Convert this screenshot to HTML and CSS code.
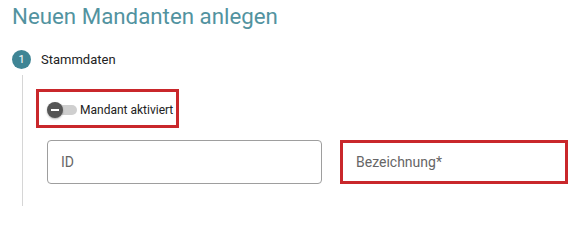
FILE: index.html
```html
<!DOCTYPE html>
<html lang="de">
<head>
<meta charset="utf-8">
<title>Neuen Mandanten anlegen</title>
<link rel="stylesheet" href="styles.css">
</head>
<body>
  <h1 class="title">Neuen Mandanten anlegen</h1>
  <div class="step">
    <div class="step-head">
      <span class="step-num">1</span>
      <span class="step-label">Stammdaten</span>
    </div>
    <div class="step-body">
      <div class="toggle-row highlight">
        <span class="switch"><span class="track"></span><span class="thumb"></span></span>
        <span class="toggle-label">Mandant aktiviert</span>
      </div>
      <div class="fields">
        <div class="field field-id"><span class="placeholder">ID</span></div>
        <div class="field field-name highlight"><span class="placeholder">Bezeichnung*</span></div>
      </div>
    </div>
  </div>
</body>
</html>
```

FILE: styles.css
```css
html, body {
  margin: 0;
  padding: 0;
  background: #ffffff;
  font-family: Roboto, "Liberation Sans", sans-serif;
  overflow: hidden;
}

.title {
  margin: 4px 0 0 12px;
  font-size: 22.3px;
  line-height: 25px;
  font-weight: 400;
  color: #5293a0;
}

.step-head {
  display: flex;
  align-items: center;
  margin-top: 21px;
  padding-left: 12px;
  height: 19px;
}

.step-num {
  width: 19px;
  height: 19px;
  border-radius: 50%;
  background: #3f8595;
  color: #ffffff;
  font-size: 11px;
  display: flex;
  align-items: center;
  justify-content: center;
}

.step-label {
  margin-left: 10px;
  font-size: 13px;
  color: #222222;
}

.step-body {
  margin: 6px 0 0 22px;
  border-left: 1px solid #d6d6d6;
  padding: 14px 0 22px 13px;
}

.highlight {
  border: 3px solid #c9272b;
  box-sizing: border-box;
}

.toggle-row {
  display: flex;
  align-items: center;
  width: 143px;
  height: 39px;
  padding-left: 8px;
  padding-top: 2px;
}

.switch {
  position: relative;
  width: 30px;
  height: 16px;
  flex: none;
}

.track {
  position: absolute;
  left: 4px;
  top: 3px;
  width: 26px;
  height: 10px;
  border-radius: 5px;
  background: #cfcfcf;
}

.thumb {
  position: absolute;
  left: 0;
  top: 0;
  width: 16px;
  height: 16px;
  border-radius: 50%;
  background: #555555;
  box-shadow: 0 1px 2px rgba(0,0,0,0.3);
}

.thumb::after {
  content: "";
  position: absolute;
  left: 4px;
  top: 7px;
  width: 8px;
  height: 2px;
  background: #ffffff;
}

.toggle-label {
  margin-left: 3px;
  font-size: 12px;
  color: #222222;
}

.fields {
  display: flex;
  gap: 18px;
  margin: 12px 0 0 11px;
}

.field {
  box-sizing: border-box;
  height: 44px;
  display: flex;
  align-items: center;
  font-size: 14px;
  color: #666666;
}

.field-id {
  width: 275px;
  border: 1px solid #9e9e9e;
  border-radius: 4px;
  padding-left: 13px;
}

.field-name {
  width: 228px;
  padding-left: 13px;
}
```
